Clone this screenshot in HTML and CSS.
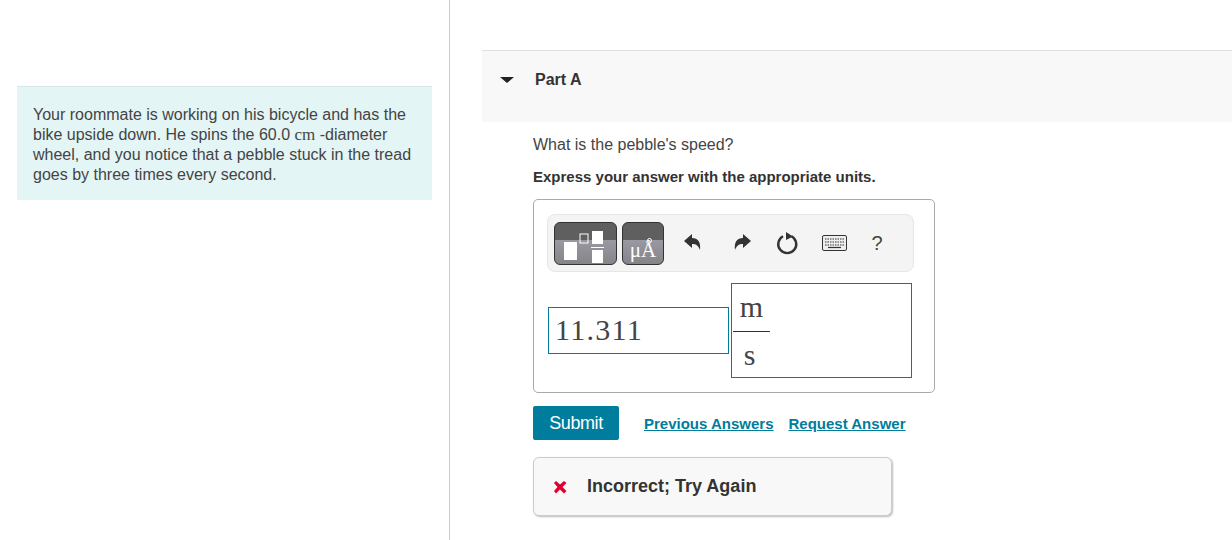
FILE: index.html
```html
<!DOCTYPE html>
<html>

<head>
  <link rel="stylesheet" href="styles.css">
</head>

<body>
  <div class="page">
    <div class="intro-col">
      <div class="intro">Your roommate is working on his bicycle and has the bike upside down. He spins the 60.0 <span class="math">cm</span> -diameter wheel, and you notice that a pebble stuck in the tread goes by three times every second.</div>
    </div>

    <div class="part-col">
      <div class="part-head">
        <span class="caret"></span>
        <h2>Part A</h2>
      </div>

      <div class="part-body">
        <div class="question">What is the pebble's speed?</div>
        <div class="instruction">Express your answer with the appropriate units.</div>

        <div class="answer-box">
          <div class="toolbar">
            <div class="tpl-btn tpl-frac">
              <svg width="63" height="43" viewBox="0 0 63 43">
                <rect x="10" y="20" width="13" height="18" fill="#fff" />
                <rect x="26" y="12" width="8" height="9" fill="none" stroke="#fff" stroke-width="1" />
                <rect x="38" y="9" width="11" height="13" fill="#fff" />
                <rect x="37" y="25" width="13" height="1" fill="#fff" />
                <rect x="38" y="28" width="11" height="13" fill="#fff" />
              </svg>
            </div>
            <div class="tpl-btn tpl-units"><span class="ring"></span>μÅ</div>
            <button class="tool tool-undo">
              <svg width="20" height="20" viewBox="0 0 20 20"><path d="M1 8 L9 1 V5 C15 5 18 9 17 17 C15 12 13 11 9 11 V15 Z" fill="#333" /></svg>
            </button>
            <button class="tool tool-redo">
              <svg width="20" height="20" viewBox="0 0 20 20"><path d="M19 8 L11 1 V5 C5 5 2 9 3 17 C5 12 7 11 11 11 V15 Z" fill="#333" /></svg>
            </button>
            <button class="tool tool-reset">
              <svg width="24" height="24" viewBox="0 0 24 24">
                <path d="M8 5.2 A9 9 0 1 0 16.5 5.2" fill="none" stroke="#333" stroke-width="2.4" />
                <path d="M11 1 L18 5.5 L11 9 Z" fill="#333" />
              </svg>
            </button>
            <button class="tool tool-keys">
              <svg width="25" height="16" viewBox="0 0 25 16">
                <rect x="0.5" y="0.5" width="24" height="15" rx="1.5" fill="#eee" stroke="#333" />
                <path d="M3 4 H22 M3 7 H22 M3 10 H22" stroke="#333" stroke-width="1.2" stroke-dasharray="1.5 1" />
                <path d="M6 12.5 H19" stroke="#333" stroke-width="1.2" />
              </svg>
            </button>
            <button class="tool tool-help">?</button>
          </div>

          <div class="entry">
            <div class="value">11.311</div>
            <div class="units">
              <div class="frac">
                <div class="num">m</div>
                <div class="den">s</div>
              </div>
            </div>
          </div>
        </div>

        <div class="actions">
          <button class="submit">Submit</button>
          <a class="link link-first" href="#">Previous Answers</a>
          <a class="link" href="#">Request Answer</a>
        </div>

        <div class="feedback">
          <svg width="18" height="18" viewBox="0 0 18 18"><path d="M3 5 L5 3 L9 6.5 L13 3 L15.5 5 L11.5 9 L15.5 13 L13 15.5 L9 11.5 L5 15.5 L3 13 L6.5 9 Z" fill="#e0002b" /></svg>
          <span>Incorrect; Try Again</span>
        </div>
      </div>
    </div>
  </div>
</body>

</html>
```

FILE: styles.css
```css
html,
body {
  margin: 0;
  padding: 0;
  height: 100%;
  overflow: hidden;
}

body {
  font-family: "Liberation Sans", Arial, sans-serif;
  font-size: 16px;
  color: #333;
  background-color: #fff;
}

.page {
  display: flex;
  height: 540px;
}

/* left column */
.intro-col {
  box-sizing: border-box;
  width: 450px;
  padding: 86px 17px 0 17px;
  border-right: 1px solid #c5ccd3;
}

.intro {
  box-sizing: border-box;
  width: 415px;
  height: 114px;
  padding: 18px 16px 0 16px;
  border-top: 1px solid #d9e6e6;
  background-color: #e4f5f6;
  line-height: 20px;
  color: #444;
}

.math {
  font-family: "Liberation Serif", serif;
  font-size: 17px;
  font-weight: bold;
  font-weight: normal;
}

/* right column */
.part-col {
  flex: 1;
  padding: 50px 0 0 32px;
}

.part-head {
  box-sizing: border-box;
  display: flex;
  align-items: flex-start;
  height: 72px;
  padding: 19px 0 0 18px;
  border-top: 1px solid #e0e0e0;
  background-color: #f8f8f8;
}

.caret {
  width: 0;
  height: 0;
  margin-top: 7px;
  border-left: 7px solid transparent;
  border-right: 7px solid transparent;
  border-top: 6px solid #222;
}

.part-head h2 {
  margin: 0 0 0 21px;
  font-size: 16px;
  line-height: 20px;
  font-weight: bold;
  color: #333;
}

.part-body {
  padding: 14px 0 0 51px;
}

.question {
  line-height: 18px;
  color: #444;
}

.instruction {
  margin-top: 14px;
  line-height: 18px;
  font-size: 15px;
  font-weight: bold;
  color: #333;
}

.answer-box {
  box-sizing: border-box;
  width: 402px;
  height: 194px;
  margin-top: 13px;
  padding: 14px 20px 0 13px;
  border: 1px solid #aaa;
  border-radius: 5px;
}

.toolbar {
  box-sizing: border-box;
  display: flex;
  align-items: center;
  width: 367px;
  height: 58px;
  padding-left: 6px;
  border: 1px solid #e6e6e6;
  border-radius: 8px;
  background-color: #f4f4f4;
}

.tpl-btn {
  box-sizing: border-box;
  position: relative;
  height: 43px;
  border: 1px solid #333;
  border-radius: 6px;
  overflow: hidden;
  background: linear-gradient(#5f5f5f 0, #5f5f5f 41%, #9a99a1 41%, #858489 100%);
}

.tpl-btn svg {
  display: block;
  margin: -1px;
}

.tpl-frac {
  width: 63px;
}

.tpl-units {
  width: 42px;
  margin-left: 5px;
  font-family: "Liberation Serif", serif;
  font-size: 21px;
  line-height: 54px;
  text-align: center;
  white-space: nowrap;
  color: #fff;
}

.ring {
  position: absolute;
  left: 24px;
  top: 15px;
  width: 3px;
  height: 3px;
  border: 1px solid #fff;
  border-radius: 50%;
}

.tool {
  display: flex;
  align-items: center;
  justify-content: center;
  padding: 0;
  border: none;
  background: none;
  font-family: "Liberation Sans", Arial, sans-serif;
}

.tool-undo {
  width: 20px;
  margin-left: 19px;
}

.tool-redo {
  width: 20px;
  margin-left: 29px;
}

.tool-reset {
  width: 24px;
  margin-left: 23px;
}

.tool-keys {
  width: 25px;
  margin-left: 23px;
}

.tool-help {
  width: 14px;
  margin-left: 23px;
  font-size: 20px;
  color: #444;
}

.entry {
  display: flex;
  align-items: center;
  margin-top: 11px;
  margin-left: 1px;
}

.value {
  box-sizing: border-box;
  width: 181px;
  height: 47px;
  padding-left: 6px;
  border: 1px solid #007c9c;
  font-family: "Liberation Serif", serif;
  font-size: 30px;
  line-height: 43px;
  letter-spacing: 1.3px;
  color: #444;
}

.units {
  box-sizing: border-box;
  width: 181px;
  height: 95px;
  margin-left: 2px;
  padding: 1px 0 0 1px;
  border: 1px solid #007c9c;
  font-family: "Liberation Serif", serif;
  font-size: 30px;
  color: #444;
}

.frac {
  width: 37px;
  text-align: center;
}

.num {
  height: 46px;
  line-height: 44px;
  border-bottom: 1px solid #333;
}

.den {
  line-height: 46px;
  padding-right: 4px;
}

.actions {
  display: flex;
  align-items: center;
  margin-top: 13px;
}

.submit {
  width: 86px;
  height: 34px;
  padding: 0;
  border: none;
  border-radius: 2px;
  background-color: #007c9c;
  color: #fff;
  font-family: "Liberation Sans", Arial, sans-serif;
  font-size: 18px;
  letter-spacing: -0.4px;
}

.link {
  margin-left: 15px;
  font-size: 15px;
  font-weight: bold;
  color: #007c9c;
}

.link-first {
  margin-left: 25px;
}

.feedback {
  box-sizing: border-box;
  display: flex;
  align-items: center;
  width: 359px;
  height: 59px;
  margin-top: 17px;
  padding-left: 17px;
  border: 1px solid #ccc;
  border-radius: 6px;
  background-color: #f8f8f8;
  box-shadow: 1px 1px 2px #bbb;
  font-size: 18px;
  font-weight: bold;
  color: #333;
}

.feedback span {
  margin-left: 18px;
}
```
